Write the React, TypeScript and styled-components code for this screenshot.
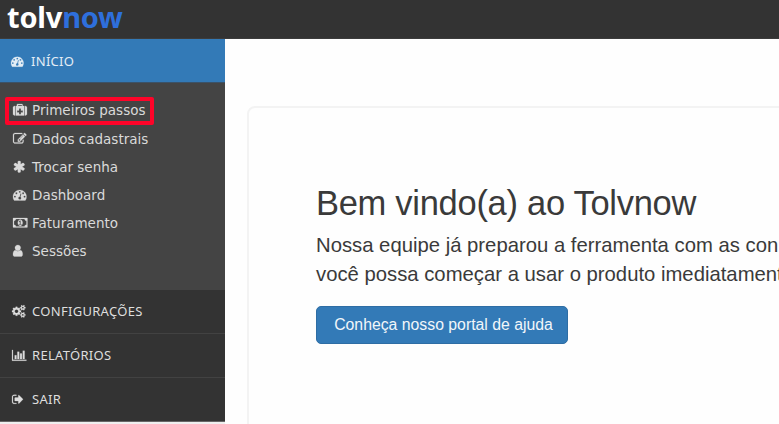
import React from "react";
import styled, { createGlobalStyle } from "styled-components";

const GlobalStyle = createGlobalStyle`
  * { box-sizing: border-box; }
  html, body { margin: 0; height: 100%; overflow: hidden; background: #fff; }
  #root { height: 100%; }
`;

const Page = styled.div`
  height: 424px;
  display: flex;
  flex-direction: column;
  overflow: hidden;
  background: #fefefe;
  font-family: "Liberation Sans", Arial, sans-serif;
  color: #333;
`;

const TopBar = styled.header`
  height: 39px;
  flex: none;
  background: #333;
  border-bottom: 1px solid #3c3c3c;
  padding-left: 7px;
`;

const Logo = styled.div`
  font: 700 29px/34px "Noto Sans", sans-serif;
  letter-spacing: -0.2px;
  color: #fff;
  span { color: #2e6fdc; }
`;

const Body = styled.div`
  flex: 1;
  display: flex;
  min-height: 0;
`;

const Sidebar = styled.nav`
  width: 225px;
  flex: none;
  background: #efefef;
  font-family: "DejaVu Sans", Verdana, sans-serif;
`;

const MainItem = styled.a<{ $active?: boolean; $last?: boolean }>`
  display: flex;
  align-items: center;
  height: 44px;
  padding-left: ${(p) => (p.$active ? 11 : 12)}px;
  padding-top: ${(p) => (p.$active ? 1 : 0)}px;
  padding-bottom: ${(p) => (p.$active ? 0 : 1)}px;
  background: ${(p) => (p.$active ? "#337ab7" : "#333")};
  border-bottom: 1px solid ${(p) => (p.$active ? "#3b5268" : p.$last ? "#666" : "#424242")};
  color: ${(p) => (p.$active ? "#e3edf5" : "#dedede")};
  font-family: "Noto Sans", Verdana, sans-serif;
  font-size: 13px;
  letter-spacing: 0.3px;
  white-space: nowrap;
`;

const SubMenu = styled.div`
  height: 207px;
  padding: 14px 0 0 5px;
  background: #444;
`;

const SubItem = styled.a<{ $marked?: boolean }>`
  display: flex;
  align-items: center;
  width: 149px;
  height: ${(p) => (p.$marked ? 28 : 28.1)}px;
  padding-left: ${(p) => (p.$marked ? 4 : 8)}px;
  padding-bottom: ${(p) => (p.$marked ? 2 : 0.8)}px;
  border: ${(p) => (p.$marked ? "4px solid #ff0429" : "0")};
  border-radius: 2px;
  color: #dadada;
  font-size: 13.5px;
  white-space: nowrap;
`;

const IconSlot = styled.span<{ $width: number }>`
  display: flex;
  flex: none;
  width: ${(p) => p.$width}px;
  svg { display: block; fill: currentColor; stroke: currentColor; stroke-width: 30px; overflow: visible; }
`;

const Content = styled.main`
  flex: 1;
  min-width: 0;
  padding: 67px 0 0 22px;
`;

const Card = styled.section`
  width: 620px;
  height: 400px;
  padding: 73px 0 0 67px;
  border: 2px solid #f3f3f3;
  border-radius: 8px;
`;

const Title = styled.h1`
  margin: 0;
  font-size: 34.5px;
  letter-spacing: -0.29px;
  font-weight: 400;
  line-height: 45px;
  color: #3a3a3a;
  white-space: nowrap;
`;

const Lead = styled.p`
  margin: 5px 0 0;
  font-size: 20.3px;
  line-height: 28.5px;
  color: #3a3a3a;
  white-space: nowrap;
`;

const HelpButton = styled.button`
  display: block;
  width: 252px;
  height: 38px;
  margin-top: 18px;
  padding: 0 0 1px 3px;
  border: 1px solid #2e6da4;
  border-radius: 5px;
  background: #337ab7;
  color: #f1f6fa;
  font: 15.8px "Liberation Sans", Arial, sans-serif;
  white-space: nowrap;
`;

type Glyph = { box: [number, number]; d: string };

const glyphs = {
  dashboard: {
    box: [0, 1792],
    d: "M384 1152q0-53-37.5-90.5t-90.5-37.5-90.5 37.5-37.5 90.5 37.5 90.5 90.5 37.5 90.5-37.5 37.5-90.5zm192-448q0-53-37.5-90.5t-90.5-37.5-90.5 37.5-37.5 90.5 37.5 90.5 90.5 37.5 90.5-37.5 37.5-90.5zm428 481l101-382q6-26-7.5-48.5t-38.5-29.5-48 6.5-30 39.5l-101 382q-60 5-107 43.5t-63 98.5q-20 77 20 146t117 89 146-20 89-117q16-60-6-117t-72-91zm660-33q0-53-37.5-90.5t-90.5-37.5-90.5 37.5-37.5 90.5 37.5 90.5 90.5 37.5 90.5-37.5 37.5-90.5zm-640-640q0-53-37.5-90.5t-90.5-37.5-90.5 37.5-37.5 90.5 37.5 90.5 90.5 37.5 90.5-37.5 37.5-90.5zm448 192q0-53-37.5-90.5t-90.5-37.5-90.5 37.5-37.5 90.5 37.5 90.5 90.5 37.5 90.5-37.5 37.5-90.5zm320 448q0 261-141 483-19 29-54 29h-1402q-35 0-54-29-141-221-141-483 0-182 71-348t191-286 286-191 348-71 348 71 286 191 191 286 71 348z",
  },
  medkit: {
    box: [-32, 1856],
    d: "M1280 1216v-192q0-14-9-23t-23-9h-224v-224q0-14-9-23t-23-9h-192q-14 0-23 9t-9 23v224h-224q-14 0-23 9t-9 23v192q0 14 9 23t23 9h224v224q0 14 9 23t23 9h192q14 0 23-9t9-23v-224h224q14 0 23-9t9-23zm-640-832h512v-128h-512v128zm-384 0v1280h-64q-92 0-158-66t-66-158v-832q0-92 66-158t158-66h64zm1184 0v1280h-1088v-1280h128v-160q0-40 28-68t68-28h576q40 0 68 28t28 68v160h128zm384 224v832q0 92-66 158t-158 66h-64v-1280h64q92 0 158 66t66 158z",
  },
  edit: {
    box: [0, 1792],
    d: "M888 1184l116-116-152-152-116 116v56h96v96h56zm440-720q-16-16-33 1l-350 350q-17 17-1 33t33-1l350-350q17-17 1-33zm80 594v190q0 119-84.5 203.5t-203.5 84.5h-832q-119 0-203.5-84.5t-84.5-203.5v-832q0-119 84.5-203.5t203.5-84.5h832q63 0 117 25 15 7 18 23 3 17-9 29l-49 49q-14 14-32 8-23-6-45-6h-832q-66 0-113 47t-47 113v832q0 66 47 113t113 47h832q66 0 113-47t47-113v-126q0-13 9-22l64-64q15-15 35-7t20 29zm-96-738l288 288-672 672h-288v-288zm444 132l-92 92-288-288 92-92q28-28 68-28t68 28l152 152q28 28 28 68t-28 68z",
  },
  asterisk: {
    box: [70, 1792],
    d: "M1546 1050q46 26 59.5 77.5t-12.5 97.5l-64 110q-26 46-77.5 59.5t-97.5-12.5l-266-153v307q0 52-38 90t-90 38h-128q-52 0-90-38t-38-90v-307l-266 153q-46 26-97.5 12.5t-77.5-59.5l-64-110q-26-46-12.5-97.5t59.5-77.5l266-154-266-154q-46-26-59.5-77.5t12.5-97.5l64-110q26-46 77.5-59.5t97.5 12.5l266 153v-307q0-52 38-90t90-38h128q52 0 90 38t38 90v307l266-153q46-26 97.5-12.5t77.5 59.5l64 110q26 46 12.5 97.5t-59.5 77.5l-266 154z",
  },
  money: {
    box: [0, 1920],
    d: "M768 1152h384v-96h-128v-448h-114l-148 137 77 80q42-37 55-57h2v288h-128v96zm512-256q0 70-21 142t-59.5 134-101.5 101-138 39-138-39-101.5-101-59.5-134-21-142 21-142 59.5-134 101.5-101 138-39 138 39 101.5 101 59.5 134 21 142zm512 256v-512q-106 0-181-75t-75-181h-1152q0 106-75 181t-181 75v512q106 0 181 75t75 181h1152q0-106 75-181t181-75zm128-832v1152q0 26-19 45t-45 19h-1792q-26 0-45-19t-19-45v-1152q0-26 19-45t45-19h1792q26 0 45 19t19 45z",
  },
  user: {
    box: [256, 1536],
    d: "M1536 1399q0 109-62.5 187t-150.5 78h-854q-88 0-150.5-78t-62.5-187q0-85 8.5-160.5t31.5-152 58.5-131 94-89 134.5-34.5q131 128 313 128t313-128q76 0 134.5 34.5t94 89 58.5 131 31.5 152 8.5 160.5zm-256-887q0 159-112.5 271.5t-271.5 112.5-271.5-112.5-112.5-271.5 112.5-271.5 271.5-112.5 271.5 112.5 112.5 271.5z",
  },
  cogs: {
    box: [0, 1920],
    d: "M896 896q0-106-75-181t-181-75-181 75-75 181 75 181 181 75 181-75 75-181zm768 512q0-52-38-90t-90-38-90 38-38 90q0 53 37.5 90.5t90.5 37.5 90.5-37.5 37.5-90.5zm0-1024q0-52-38-90t-90-38-90 38-38 90q0 53 37.5 90.5t90.5 37.5 90.5-37.5 37.5-90.5zm-384 421v185q0 10-7 19.5t-16 10.5l-155 24q-11 35-32 76 34 48 90 115 7 11 7 20 0 12-7 19-23 30-82.5 89.5t-78.5 59.5q-11 0-21-7l-115-90q-37 19-77 31-11 108-23 155-7 24-30 24h-186q-11 0-20-7.5t-10-17.5l-23-153q-34-10-75-31l-118 89q-7 7-20 7-11 0-21-8-144-133-144-160 0-9 7-19 10-14 41-53t47-61q-23-44-35-82l-152-24q-10-1-17-9.5t-7-19.5v-185q0-10 7-19.5t16-10.5l155-24q11-35 32-76-34-48-90-115-7-11-7-20 0-12 7-20 22-30 82-89t79-59q11 0 21 7l115 90q34-18 77-32 11-108 23-154 7-24 30-24h186q11 0 20 7.5t10 17.5l23 153q34 10 75 31l118-89q8-7 20-7 11 0 21 8 144 133 144 160 0 8-7 19-12 16-42 54t-45 60q23 48 34 82l152 23q10 2 17 10.5t7 19.5zm640 533v140q0 16-149 31-12 27-30 52 51 113 51 138 0 4-4 7-122 71-124 71-8 0-46-47t-52-68q-20 2-30 2t-30-2q-14 21-52 68t-46 47q-2 0-124-71-4-3-4-7 0-25 51-138-18-25-30-52-149-15-149-31v-140q0-16 149-31 13-29 30-52-51-113-51-138 0-4 4-7 4-2 35-20t59-34 30-16q8 0 46 46.5t52 67.5q20-2 30-2t30 2q51-71 92-112l6-2q4 0 124 70 4 3 4 7 0 25-51 138 17 23 30 52 149 15 149 31zm0-1024v140q0 16-149 31-12 27-30 52 51 113 51 138 0 4-4 7-122 71-124 71-8 0-46-47t-52-68q-20 2-30 2t-30-2q-14 21-52 68t-46 47q-2 0-124-71-4-3-4-7 0-25 51-138-18-25-30-52-149-15-149-31v-140q0-16 149-31 13-29 30-52-51-113-51-138 0-4 4-7 4-2 35-20t59-34 30-16q8 0 46 46.5t52 67.5q20-2 30-2t30 2q51-71 92-112l6-2q4 0 124 70 4 3 4 7 0 25-51 138 17 23 30 52 149 15 149 31z",
  },
  chart: {
    box: [0, 2048],
    d: "M640 896v512h-256v-512h256zm384-512v1024h-256v-1024h256zm1024 1152v128h-2048v-1536h128v1408h1920zm-640-896v768h-256v-768h256zm384-384v1152h-256v-1152h256z",
  },
  exit: {
    box: [64, 1664],
    d: "M704 1440q0 4 1 20t.5 26.5-3 23.5-10 19.5-20.5 6.5h-320q-119 0-203.5-84.5t-84.5-203.5v-704q0-119 84.5-203.5t203.5-84.5h320q13 0 22.5 9.5t9.5 22.5q0 4 1 20t.5 26.5-3 23.5-10 19.5-20.5 6.5h-320q-66 0-113 47t-47 113v704q0 66 47 113t113 47h312l11.5 1 11.5 3 8 5.5 7 9 2 13.5zm928-544q0 26-19 45l-544 544q-19 19-45 19t-45-19-19-45v-288h-448q-26 0-45-19t-19-45v-384q0-26 19-45t45-19h448v-288q0-26 19-45t45-19 45 19l544 544q19 19 19 45z",
  },
} satisfies Record<string, Glyph>;

function Icon({ name, size, slot }: { name: keyof typeof glyphs; size: number; slot: number }) {
  const { box, d } = glyphs[name];
  return (
    <IconSlot $width={slot}>
      <svg width={(size * box[1]) / 1792} height={size} viewBox={`${box[0]} 0 ${box[1]} 1792`} aria-hidden="true">
        <path d={d} />
      </svg>
    </IconSlot>
  );
}

const subItems: { icon: keyof typeof glyphs; label: string; marked?: boolean }[] = [
  { icon: "medkit", label: "Primeiros passos", marked: true },
  { icon: "edit", label: "Dados cadastrais" },
  { icon: "asterisk", label: "Trocar senha" },
  { icon: "dashboard", label: "Dashboard" },
  { icon: "money", label: "Faturamento" },
  { icon: "user", label: "Sessões" },
];

export default function App() {
  return (
    <Page>
      <GlobalStyle />
      <TopBar>
        <Logo>tolv<span>now</span></Logo>
      </TopBar>
      <Body>
        <Sidebar>
          <MainItem $active><Icon name="dashboard" size={12.6} slot={20} />INÍCIO</MainItem>
          <SubMenu>
            {subItems.map((item) => (
              <SubItem key={item.label} $marked={item.marked}>
                <Icon name={item.icon} size={13.5} slot={19} />
                {item.label}
              </SubItem>
            ))}
          </SubMenu>
          <MainItem><Icon name="cogs" size={12.6} slot={20} />CONFIGURAÇÕES</MainItem>
          <MainItem><Icon name="chart" size={12.6} slot={20} />RELATÓRIOS</MainItem>
          <MainItem $last><Icon name="exit" size={12.6} slot={20} />SAIR</MainItem>
        </Sidebar>
        <Content>
          <Card>
            <Title>Bem vindo(a) ao Tolvnow</Title>
            <Lead>
              Nossa equipe já preparou a ferramenta com as con
              <br />
              você possa começar a usar o produto imediatament
            </Lead>
            <HelpButton>Conheça nosso portal de ajuda</HelpButton>
          </Card>
        </Content>
      </Body>
    </Page>
  );
}
